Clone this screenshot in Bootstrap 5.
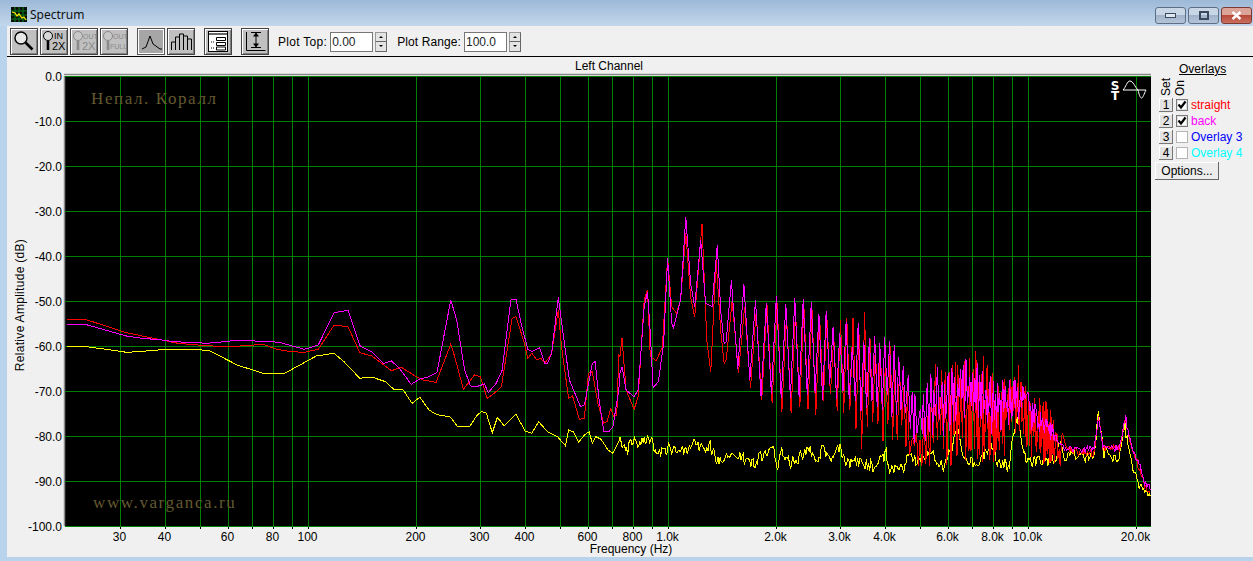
<!DOCTYPE html>
<html lang="en">
<head>
  <meta charset="UTF-8" />
  <title>Spectrum</title>
  <link href="https://cdn.jsdelivr.net/npm/bootstrap@5.3.2/dist/css/bootstrap.min.css" rel="stylesheet"/>
  <style>
    html, body { height: 561px; overflow: hidden; }
    body { background: #bad3ec; font: 12px "Liberation Sans", Arial, sans-serif; color: #000; }
    .title-bar { height: 26px; padding: 3px 0 0 11px; background: linear-gradient(#9db9d8, #c3d7eb); font: 12px "Noto Sans", sans-serif; color: #111; }
    .title-text { margin-left: 3px; }
    .win-btn { width: 31px; height: 17px; margin-top: 2px; border: 1px solid #5c6f86; border-radius: 3px; background: linear-gradient(#c9d6e5 45%, #a0b3ca 50%, #b4c5d8); }
    .win-btn.win-close { background: linear-gradient(#dca398 45%, #b84a3c 50%, #c9705f); border-color: #7c3a34; }
    .win-btns { gap: 2px; padding-right: 1px; }
    .client { height: 531px; margin-left: 7px; background: #f0f0f0; }
    .tool-bar { height: 31px; padding: 1px 0 0 3px; border-bottom: 1px solid #000; }
    .tool-btn { width: 28px; height: 27px; padding: 0; margin-right: 2px; border: 1px solid #444; border-radius: 0; background: #c0c0c0; box-shadow: inset 1px 1px #fff, inset -1px -1px #808080; line-height: 0; }
    .tool-btn.is-down { background: #a6a6a6; border-color: #555; box-shadow: inset 1px 1px #fff, inset -1px -1px #fff; }
    .tool-btn svg { display: block; margin: 0 auto; }
    .tool-btn text { font: 9px "Liberation Sans", sans-serif; }
    .sep-a { margin-left: 7px; }
    .sep-b { margin-left: 7px; }
    .field-label { white-space: nowrap; letter-spacing: .3px; }
    .plot-top-label { margin-left: 7px; }
    .plot-range-label { margin-left: 10px; letter-spacing: .1px; }
    .plot-input { width: 43px; height: 20px; padding: 0 1px; margin-left: 3px; border: 1px solid #777; border-radius: 0; font-size: 12px; background: #fff; }
    .spin { width: 12px; height: 20px; margin-left: 2px; }
    .spin i { display: flex; align-items: center; justify-content: center; flex: 1; background: #e4e4e4; border: 1px solid #999; border-right-color: #666; border-bottom-color: #666; }
    .spin i + i { border-top: 0; }
    .spin i::before { content: ""; border-left: 2px solid transparent; border-right: 2px solid transparent; }
    .spin .up::before { border-bottom: 2px solid #000; }
    .spin .dn::before { border-top: 2px solid #000; }
    .chart-box { width: 1148px; height: 500px; display: block; background: #f0f0f0; }
    .chart-box text { font: 12px "Liberation Sans", sans-serif; fill: #000; }
    .chart-box .mark-top { font: 17px "Liberation Serif", serif; letter-spacing: 1.6px; fill: #645a30; }
    .chart-box .sym { font: bold 12px "DejaVu Sans", sans-serif; fill: #fff; }
    .side { width: 98px; padding-top: 6px; }
    .side-head { margin-left: 24px; height: 13px; line-height: 13px; text-decoration: underline; }
    .side-vert { height: 21px; margin-left: 5px; gap: 2px; }
    .side-vert span { writing-mode: vertical-rl; transform: rotate(180deg); line-height: 12px; width: 12px; height: 20px; text-align: left; }
    .ov-row { height: 16px; padding-left: 4px; }
    .set-btn { width: 14px; height: 14px; padding: 0; border: 0; border-radius: 0; background: #e3e3e3; box-shadow: inset -1px -1px #777, inset 1px 1px #fff; font-size: 12px; line-height: 13px; color: #000; }
    .ov-check { width: 12px; height: 12px; margin-left: 3px; background: #fff; border: 1px solid #7a7a7a; box-shadow: inset 0 0 0 1px #e2e2e2; line-height: 0; }
    .ov-check.off { border-color: #b5b5b5; box-shadow: none; }
    .ov-name { margin-left: 3px; white-space: nowrap; }
    .opt-btn { width: 64px; height: 18px; padding: 0; margin-top: 1px; border: 0; border-radius: 0; background: #ececec; box-shadow: inset -1px -1px #666, inset 1px 1px #fff; font-size: 12px; line-height: 16px; color: #000; }
  </style>
</head>
<body>
  <div class="title-bar d-flex align-items-center">
    <svg width="16" height="15" viewBox="0 0 16 15">
      <rect width="16" height="15" fill="#061006"/>
      <path d="M0 4h16M0 8h16M0 12h16M4 0v15M8 0v15M12 0v15" stroke="#0a7a1a" stroke-width="1"/>
      <path d="M1 5l3 1 2 3 2-2 3 4 2-1 2 3" fill="none" stroke="#ffe900" stroke-width="1.2"/>
    </svg>
    <span class="title-text">Spectrum</span>
    <div class="win-btns d-flex ms-auto">
      <div class="win-btn d-flex align-items-center justify-content-center">
        <svg width="11" height="5"><rect x=".5" y=".5" width="10" height="4" fill="#dfe7f0" stroke="#3a4a5e"/></svg>
      </div>
      <div class="win-btn d-flex align-items-center justify-content-center">
        <svg width="10" height="9"><rect x="1" y="1" width="8" height="7" fill="none" stroke="#3a4a5e" stroke-width="2"/></svg>
      </div>
      <div class="win-btn win-close d-flex align-items-center justify-content-center">
        <svg width="11" height="9"><path d="M1.5 1l8 7M9.5 1l-8 7" stroke="#fff" stroke-width="2.4"/></svg>
      </div>
    </div>
  </div>

  <div class="client">
    <div class="tool-bar d-flex align-items-center">
      <button class="btn tool-btn" type="button" title="Zoom">
        <svg width="26" height="25" viewBox="0 0 26 25"><circle cx="10" cy="9" r="6" fill="#e8e8e8" stroke="#000" stroke-width="1.4"/><path d="M14.5 13.5l7 7" stroke="#000" stroke-width="2.6"/></svg>
      </button>
      <button class="btn tool-btn" type="button" title="Zoom in 2X">
        <svg width="26" height="25" viewBox="0 0 26 25"><circle cx="7" cy="7" r="4.5" fill="#d8d8d8" stroke="#000"/><path d="M7 12v9" stroke="#000" stroke-width="2.6"/><text x="13" y="10" font-size="8">IN</text><text x="11" y="21" style="font-size:11px">2X</text></svg>
      </button>
      <button class="btn tool-btn" type="button" title="Zoom out 2X">
        <svg width="26" height="25" viewBox="0 0 26 25"><circle cx="7" cy="7" r="4.5" fill="#c8c8c8" stroke="#8a8a8a"/><path d="M7 12v9" stroke="#8a8a8a" stroke-width="2.6"/><text x="12" y="10" fill="#8a8a8a" style="font-size:7px">OUT</text><text x="11" y="21" fill="#8a8a8a" style="font-size:11px">2X</text></svg>
      </button>
      <button class="btn tool-btn" type="button" title="Zoom out full">
        <svg width="26" height="25" viewBox="0 0 26 25"><circle cx="7" cy="7" r="4.5" fill="#c8c8c8" stroke="#8a8a8a"/><path d="M7 12v9" stroke="#8a8a8a" stroke-width="2.6"/><text x="12" y="10" fill="#8a8a8a" style="font-size:7px">OUT</text><text x="9" y="20" fill="#8a8a8a" style="font-size:7px">FULL</text></svg>
      </button>
      <button class="btn tool-btn is-down sep-a" type="button" title="Line">
        <svg width="26" height="25" viewBox="0 0 26 25"><path d="M4 20l4-2 4-11 3 8 7 5h2" fill="none" stroke="#000"/></svg>
      </button>
      <button class="btn tool-btn" type="button" title="Bars">
        <svg width="26" height="25" viewBox="0 0 26 25"><path d="M3.500 21v-8h4v8M7.500 21V8h4v13M11.500 21V5h4v16M15.500 21V7h4v14M19.500 21V10h4v11" fill="none" stroke="#000" stroke-width="1"/></svg>
      </button>
      <button class="btn tool-btn sep-b" type="button" title="Settings">
        <svg width="26" height="25" viewBox="0 0 26 25"><rect x="3.500" y="2.500" width="19" height="20" fill="#fff" stroke="#000"/><path d="M4 4h18v2H4z" fill="#666"/><path d="M11.500 8.500h9v3h-9zM11.500 13.500h9v3h-9zM11.500 18h9v3h-9z" fill="#fff" stroke="#000"/><path d="M6 13h3M6 19h3" stroke="#000" stroke-dasharray="1 1"/></svg>
      </button>
      <button class="btn tool-btn sep-b" type="button" title="Range">
        <svg width="26" height="25" viewBox="0 0 26 25"><path d="M4.500 3v18.500h19" fill="none" stroke="#000"/><path d="M9 3.500h10M9 18.500h10M14 4v14" stroke="#000"/><path d="M14 3.500l-3 4h6zM14 18.500l-3-4h6z" fill="#000"/></svg>
      </button>

      <span class="field-label plot-top-label">Plot Top:</span>
      <input class="form-control plot-input" value="0.00" aria-label="Plot Top">
      <div class="spin d-flex flex-column"><i class="up"></i><i class="dn"></i></div>
      <span class="field-label plot-range-label">Plot Range:</span>
      <input class="form-control plot-input" value="100.0" aria-label="Plot Range">
      <div class="spin d-flex flex-column"><i class="up"></i><i class="dn"></i></div>
    </div>

    <div class="d-flex">
      <svg id="chart" class="chart-box" viewBox="7 57 1148 500"></svg>
      <div class="side">
        <div class="side-head">Overlays</div>
        <div class="side-vert d-flex"><span>Set</span><span>On</span></div>
        <div class="ov-row d-flex align-items-center">
          <button class="btn set-btn" type="button">1</button>
          <span class="ov-check"><svg width="10" height="10" viewBox="0 0 10 10"><path d="M1.500 4.500l2.500 3 4.500-6" fill="none" stroke="#000" stroke-width="2.200"/></svg></span>
          <span class="ov-name" style="color:#f00">straight</span>
        </div>
        <div class="ov-row d-flex align-items-center">
          <button class="btn set-btn" type="button">2</button>
          <span class="ov-check"><svg width="10" height="10" viewBox="0 0 10 10"><path d="M1.500 4.500l2.500 3 4.500-6" fill="none" stroke="#000" stroke-width="2.200"/></svg></span>
          <span class="ov-name" style="color:#f0f">back</span>
        </div>
        <div class="ov-row d-flex align-items-center">
          <button class="btn set-btn" type="button">3</button>
          <span class="ov-check off"></span>
          <span class="ov-name" style="color:#00f">Overlay 3</span>
        </div>
        <div class="ov-row d-flex align-items-center">
          <button class="btn set-btn" type="button">4</button>
          <span class="ov-check off"></span>
          <span class="ov-name" style="color:#0ff">Overlay 4</span>
        </div>
        <button class="btn opt-btn" type="button">Options...</button>
      </div>
    </div>
  </div>

  <script src="https://cdn.jsdelivr.net/npm/bootstrap@5.3.2/dist/js/bootstrap.bundle.min.js"></script>
  <script>
    // plot rectangle in page pixels
    const L = 65, R = 1151, T = 76, B = 526;
    const fx = f => 308 + 360 * Math.log10(f / 100);
    const z3 = a => a.map(p => [p[0] / 2.529, 280 + p[1] / 3]);
    const z4 = a => a.map(p => [620 + p[0] / 2.477, 200 + p[1] / 3]);

    // small seeded generator so the noise stays the same on each run
    function rng(seed) {
      return () => (seed = (seed * 16807) % 2147483647) / 2147483647;
    }
    function lerp(a, x) {
      if (x <= a[0][0]) return a[0][1];
      for (let i = 1; i < a.length; i++) {
        if (x <= a[i][0]) {
          const t = (x - a[i - 1][0]) / (a[i][0] - a[i - 1][0]);
          return a[i - 1][1] + t * (a[i][1] - a[i - 1][1]);
        }
      }
      return a[a.length - 1][1];
    }

    const magLow = z3([[170,133],[215,133],[260,148],[320,168],[360,175],[410,180],[440,185],[500,188],[520,190],[545,188],[575,184],[600,181],[635,181],[650,184],[680,184],[710,188],[730,195],[770,208],[805,195],[845,98],[880,91],[910,197],[940,215],[970,250],[990,243],[1010,265],[1040,313],[1060,298],[1085,290],[1105,278],[1140,60],[1155,120],[1175,270],[1190,318],[1205,320],[1225,312],[1235,338],[1255,310],[1270,270],[1292,60],[1305,58],[1320,140],[1335,208],[1345,215],[1365,203],[1378,250],[1385,250],[1395,220],[1412,52],[1425,170],[1440,300],[1468,380],[1478,375],[1490,300],[1498,250],[1505,245],[1515,360],[1527,455],[1540,455],[1550,440],[1565,330]]);
    const redLow = z3([[170,118],[215,118],[260,135],[320,158],[400,178],[450,190],[520,197],[580,200],[620,197],[665,193],[700,208],[735,215],[770,217],[805,208],[845,135],[880,140],[910,218],[940,228],[990,272],[1015,262],[1050,288],[1070,300],[1103,307],[1140,192],[1150,230],[1172,328],[1200,285],[1215,290],[1232,355],[1250,340],[1268,320],[1295,115],[1305,110],[1325,185],[1335,235],[1345,220],[1358,240],[1368,235],[1378,250],[1395,220],[1412,90],[1420,200],[1438,355],[1448,348],[1465,418],[1478,415],[1488,280],[1498,275],[1512,370],[1527,430],[1535,425],[1545,385],[1552,410],[1560,405],[1565,225]]);
    const yelLow = z3([[170,199],[225,201],[280,210],[320,217],[350,215],[420,208],[490,208],[530,212],[600,255],[665,280],[720,280],[800,228],[845,220],[870,245],[910,295],[940,291],[975,305],[995,327],[1020,330],[1042,370],[1062,352],[1085,390],[1105,404],[1138,410],[1158,441],[1188,439],[1205,408],[1218,394],[1230,400],[1245,458],[1258,412],[1275,438],[1305,403],[1328,453],[1345,460],[1362,425],[1385,455],[1410,470],[1430,497],[1438,450],[1450,455],[1463,487],[1478,465],[1490,455],[1498,490],[1507,470],[1520,478],[1538,510],[1550,520],[1565,485]]);

    const magMid = z4([[0,520],[5,500],[15,570],[35,590],[45,570],[60,320],[68,275],[75,400],[82,563],[95,545],[108,430],[118,175],[128,370],[132,385],[150,300],[163,50],[175,250],[185,320],[200,120],[212,310],[228,320],[241,135],[250,340],[258,430],[263,425]]);
    const redMid = z4([[0,470],[5,415],[15,570],[35,628],[45,590],[60,300],[68,270],[75,470],[90,482],[105,440],[118,175],[128,320],[140,340],[150,300],[163,100],[175,290],[185,352],[203,72],[215,420],[225,515],[238,180],[250,400],[258,490],[263,480]]);

    const magTop = z4([[273,240],[305,242],[335,280],[360,300],[388,275],[410,310],[432,275],[452,295],[473,265],[492,325],[510,290],[528,350],[545,345],[562,360],[575,390],[590,370],[620,385],[640,420],[655,400],[672,430],[690,400],[705,470],[720,545],[745,600],[760,545],[780,490],[820,490],[840,500],[860,470],[880,470],[900,490],[920,530],[940,540],[980,530],[1000,560],[1020,590],[1040,630],[1060,650],[1080,680],[1090,735]]);
    const magBot = z4([[275,480],[345,580],[397,590],[464,590],[520,570],[550,590],[640,620],[700,640],[740,760],[760,700],[800,680],[850,620],[900,650],[930,680],[960,640],[1000,600],[1040,680],[1080,700],[1090,755]]);
    const redTop = z4([[273,300],[335,330],[388,300],[432,330],[470,310],[510,340],[545,360],[605,335],[640,400],[690,450],[720,600],[745,700],[780,490],[820,490],[860,470],[893,445],[905,475],[940,550],[990,490],[1020,575],[1065,610],[1090,735]]);
    const redBot = z4([[275,490],[345,590],[420,625],[465,590],[550,610],[585,670],[640,685],[690,695],[740,770],[775,750],[840,720],[880,715],[915,780],[940,740],[975,640],[1040,760],[1090,760]]);

    // harmonics of about 125 Hz make the comb between 1.5k and 12k
    function comb(top, bot, seed, shift, deep) {
      const r = rng(seed), out = [];
      for (let n = 12; n <= 97; n++) {
        const amp = Math.min(1, (n - 8) / 24);
        const wob = n > 36 ? (r() - 0.5) * 1.6 : 0;
        const x1 = fx(n * 125) + shift + wob, x2 = fx((n + 0.5) * 125) + shift + wob;
        out.push([x1, lerp(top, x1) + r() * r() * 40 * amp]);
        out.push([x2, Math.min(466, lerp(bot, x2) + (r() - 0.6) * 26 * amp + r() * r() * deep * amp)]);
      }
      return out;
    }
    // flat noisy tail, then the two spikes at the top end
    function tail(base, seed, amp) {
      const r = rng(seed), out = [];
      const [x0, x1] = [base[0][0], base[base.length - 1][0]];
      for (let x = x0; x <= x1; x += 1.1) {
        out.push([x, lerp(base, x) + (r() - 0.5) * amp]);
      }
      return out;
    }
    const tailMag = z4([[1095,745],[1175,748],[1185,645],[1197,745],[1238,742],[1252,650],[1265,730],[1285,790],[1300,850],[1314,860]]);
    const tailRed = z4([[1095,710],[1110,750],[1175,762],[1185,650],[1197,748],[1238,745],[1252,660],[1265,740],[1285,800],[1300,860],[1314,880]]);

    const yelHigh = z4([[0,730],[15,760],[33,720],[42,745],[75,712],[90,770],[125,738],[140,765],[190,725],[210,765],[222,735],[240,780],[290,770],[330,790],[380,740],[390,810],[400,745],[420,790],[470,750],[490,800],[500,745],[520,780],[545,745],[560,790],[600,790],[630,800],[660,760],[665,805],[700,810],[715,770],[740,790],[770,755],[800,800],[818,755],[838,685],[850,760],[880,800],[905,760],[920,735],[935,785],[965,800],[975,690],[985,655],[1000,760],[1015,790],[1040,775],[1080,785],[1090,720],[1100,765],[1175,770],[1185,630],[1197,755],[1235,790],[1250,670],[1265,790],[1285,850],[1314,888]]);

    const magenta = magLow.concat(magMid, comb(magTop, magBot, 4711, 0, 12), tail(tailMag, 99, 7));
    const red = redLow.concat(redMid, comb(redTop, redBot, 1237, 0.7, 30), tail(tailRed, 555, 7));
    const yellow = yelLow.concat(tail(yelHigh, 321, 12));

    const pts = a => a.map(p => p[0].toFixed(1) + ',' + p[1].toFixed(1)).join(' ');
    let s = `<defs><clipPath id="plotClip"><rect x="${L}" y="${T - 1}" width="${R - L}" height="${B - T + 2}"/></clipPath></defs>`;

    s += `<rect x="${L}" y="${T}" width="${R - L}" height="${B - T}" fill="#000"/>`;
    s += `<path d="M${L - 1} ${T - 1.5}H${R}M${L - 0.5} ${T}V${B}" stroke="#8a8a8a" stroke-width="1.5" fill="none"/>`;

    // grid and ticks
    let grid = '';
    for (let i = 0; i <= 10; i++) {
      const y = T + i * 45;
      grid += `M${L} ${y + 0.5}H${R}`;
      s += `<text x="62" y="${y + 5}" text-anchor="end">${i === 0 ? '0.0' : '-' + (i * 10).toFixed(1)}</text>`;
    }
    const freqs = [30, 40, 50, 60, 70, 80, 90, 100, 200, 300, 400, 500, 600, 700, 800, 900, 1000, 2000, 3000, 4000, 5000, 6000, 7000, 8000, 9000, 10000, 20000];
    const labelled = { 30: '30', 40: '40', 60: '60', 80: '80', 100: '100', 200: '200', 300: '300', 400: '400', 600: '600', 800: '800', 1000: '1.0k', 2000: '2.0k', 3000: '3.0k', 4000: '4.0k', 6000: '6.0k', 8000: '8.0k', 10000: '10.0k', 20000: '20.0k' };
    freqs.forEach(f => {
      const x = Math.round(fx(f)) + 0.5;
      grid += `M${x} ${T}V${B}`;
      s += `<path d="M${x} ${B}v3" stroke="#000"/>`;
      if (labelled[f]) s += `<text x="${x - 1}" y="541" text-anchor="middle">${labelled[f]}</text>`;
    });
    s += `<path d="${grid}" stroke="#008000" fill="none" shape-rendering="crispEdges"/>`;

    // traces
    s += `<g clip-path="url(#plotClip)" fill="none" stroke-width="1" shape-rendering="crispEdges">`;
    s += `<polyline points="${pts(yellow)}" stroke="#ff0"/>`;
    s += `<polyline points="${pts(red)}" stroke="#f00"/>`;
    s += `<polyline points="${pts(magenta)}" stroke="#f0f"/>`;
    s += `</g>`;

    // axis titles and watermark text
    s += `<text x="609" y="70" text-anchor="middle">Left Channel</text>`;
    s += `<text x="631" y="553" text-anchor="middle">Frequency (Hz)</text>`;
    s += `<text transform="translate(24 305) rotate(-90)" text-anchor="middle" style="letter-spacing:.3px">Relative Amplitude (dB)</text>`;
    s += `<text class="mark-top" x="91" y="104">Непал. Коралл</text>`;
    s += `<text class="mark-top" x="93" y="508">www.varganca.ru</text>`;

    // channel symbol, top right of the plot
    s += `<text class="sym" x="1115" y="90" text-anchor="middle">S</text><text class="sym" x="1115" y="100" text-anchor="middle">T</text>`;
    s += `<path d="M1123 90H1146M1123 90C1126 87 1127 81 1130 81C1133 81 1135 87 1138 90C1139 94 1140 98 1141.5 98C1143 98 1144 94 1146 90" fill="none" stroke="#fff"/>`;

    document.getElementById('chart').innerHTML = s;
  </script>
</body>
</html>
